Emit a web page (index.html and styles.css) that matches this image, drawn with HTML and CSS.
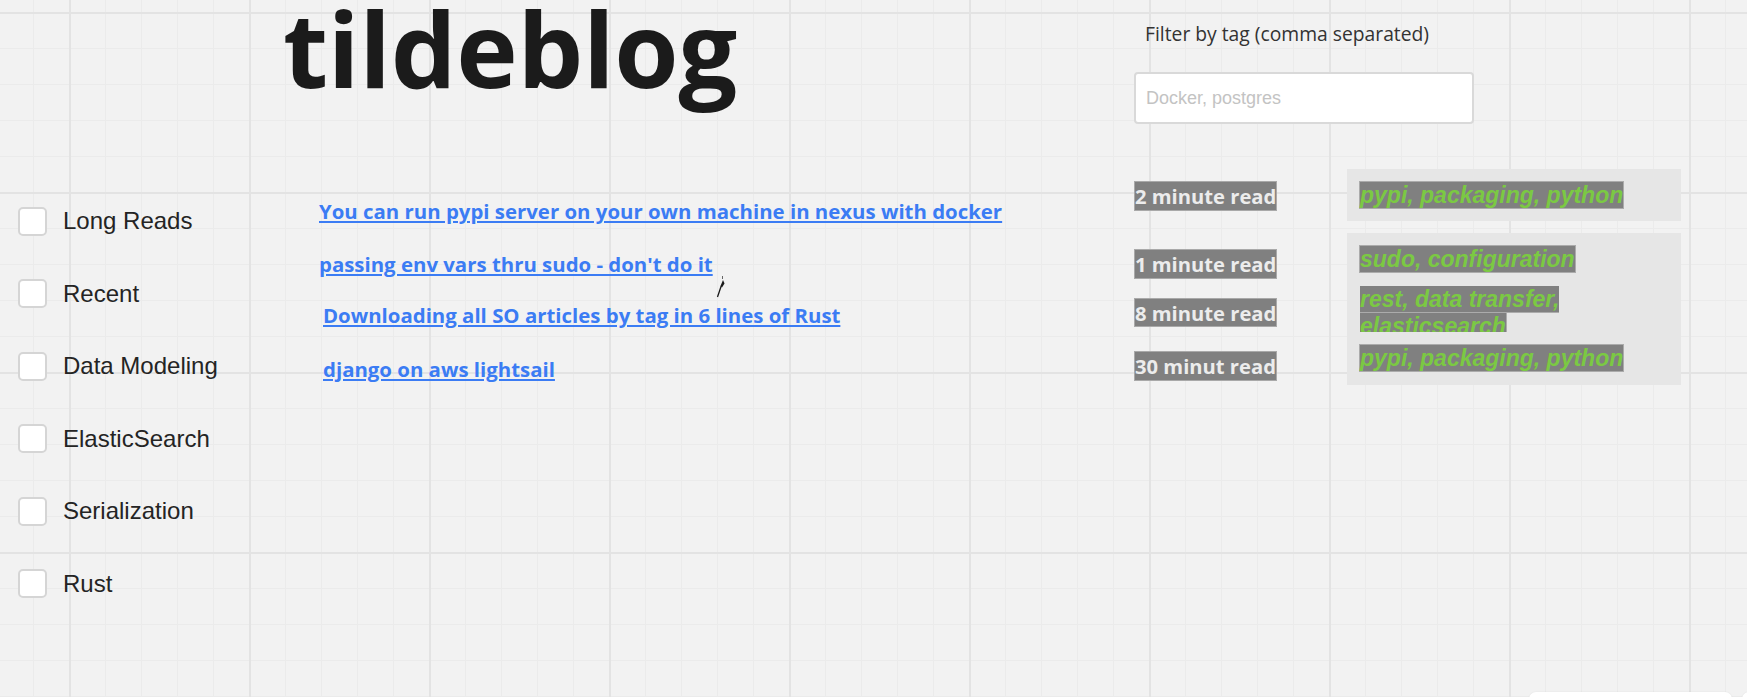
FILE: index.html
```html
<!DOCTYPE html>
<html lang="en">
<head>
<meta charset="utf-8">
<title>tildeblog</title>
<link rel="stylesheet" href="styles.css">
</head>
<body>
<div class="page">
  <header class="top">
    <h1 class="title">tildeblog</h1>
    <div class="filter">
      <label class="filter-label" for="tagfilter">Filter by tag (comma separated)</label>
      <input class="filter-input" id="tagfilter" type="text" placeholder="Docker, postgres">
    </div>
  </header>

  <main class="main">
    <ul class="cats">
      <li class="cat"><input class="box" type="checkbox"><span class="cat-label">Long Reads</span></li>
      <li class="cat"><input class="box" type="checkbox"><span class="cat-label">Recent</span></li>
      <li class="cat"><input class="box" type="checkbox"><span class="cat-label">Data Modeling</span></li>
      <li class="cat"><input class="box" type="checkbox"><span class="cat-label">ElasticSearch</span></li>
      <li class="cat"><input class="box" type="checkbox"><span class="cat-label">Serialization</span></li>
      <li class="cat"><input class="box" type="checkbox"><span class="cat-label">Rust</span></li>
    </ul>

    <div class="posts">
      <div class="post"><a class="post-link" href="#">You can run pypi server on your own machine in nexus with docker</a></div>
      <div class="post"><a class="post-link" href="#">passing env vars thru sudo - don't do it</a></div>
      <div class="post indent"><a class="post-link" href="#">Downloading all SO articles by tag in 6 lines of Rust</a></div>
      <div class="post indent"><a class="post-link" href="#">django on aws lightsail</a></div>
    </div>

    <div class="reads">
      <div class="read"><span class="badge">2 minute read</span></div>
      <div class="read"><span class="badge">1 minute read</span></div>
      <div class="read"><span class="badge">8 minute read</span></div>
      <div class="read"><span class="badge">30 minut read</span></div>
    </div>

    <div class="tagcol">
      <div class="tagbox">
        <div class="tagitem"><span class="tags">pypi, packaging, python</span></div>
      </div>
      <div class="tagbox">
        <div class="tagitem"><span class="tags">sudo, configuration</span></div>
        <div class="tagitem clipped"><span class="tags">rest, data transfer, elasticsearch</span></div>
        <div class="tagitem"><span class="tags">pypi, packaging, python</span></div>
      </div>
    </div>
  </main>

  <svg class="cursor" width="14" height="24" viewBox="0 0 14 24" aria-hidden="true">
    <path d="M9.5 1 L9.5 4" stroke="#666" stroke-width="1" fill="none"/>
    <path d="M10 5 L11.5 8.5 L9 12.5 L7.5 11 Z" fill="#1a1a1a"/>
    <path d="M8.2 11 L4.5 22" stroke="#1a1a1a" stroke-width="1.3" fill="none"/>
  </svg>

  <div class="dock"></div>
  <div class="dock dock-small"></div>
</div>
</body>
</html>
```

FILE: styles.css
```css
* { box-sizing: border-box; }

html, body {
  margin: 0;
  padding: 0;
}

.page {
  position: relative;
  width: 100vw;
  height: 100vh;
  overflow: hidden;
  background-color: #f2f2f2;
  background-image:
    linear-gradient(to right, #e3e3e3 0 2px, transparent 2px),
    linear-gradient(to bottom, #e3e3e3 0 2px, transparent 2px),
    linear-gradient(to right, #ebebeb 0 1px, transparent 1px),
    linear-gradient(to bottom, #ebebeb 0 1px, transparent 1px);
  background-size: 180px 180px, 180px 180px, 36px 36px, 36px 36px;
  background-position: 69px 0, 0 12px, 33px 0, 0 12px;
  font-family: "Open Sans", "Liberation Sans", sans-serif;
}

/* header */
.top {
  display: flex;
  align-items: flex-start;
  height: 169px;
  padding-left: 283px;
}

.title {
  flex: 0 0 851px;
  margin: 7.6px 0 0 0;
  font-family: "Open Sans", sans-serif;
  font-weight: 700;
  font-size: 104px;
  line-height: 80px;
  color: #1b1b1b;
  letter-spacing: -0.3px;
}

.filter {
  display: flex;
  flex-direction: column;
  padding-top: 20px;
}

.filter-label {
  display: block;
  height: 27px;
  margin-left: 11px;
  font-family: "Open Sans", sans-serif;
  font-size: 19.3px;
  color: #333;
}

.filter-input {
  margin-top: 25px;
  width: 340px;
  height: 52px;
  padding: 0 10px;
  border: 2px solid #d9d9d9;
  border-radius: 4px;
  background: #fff;
  font-family: "Liberation Sans", Arial, sans-serif;
  font-size: 18px;
  color: #333;
  outline: none;
}

.filter-input::placeholder {
  color: #c3c3c3;
}

/* main area */
.main {
  display: flex;
  align-items: flex-start;
}

.cats {
  flex: 0 0 319px;
  list-style: none;
  margin: 0;
  padding: 15.75px 0 0 18px;
}

.cat {
  display: flex;
  align-items: center;
  gap: 16px;
  height: 72.55px;
}

.box {
  appearance: none;
  -webkit-appearance: none;
  margin: 0;
  width: 29px;
  height: 29px;
  background: #fff;
  border: 2.5px solid #d5d5d5;
  border-radius: 5px;
}

.cat-label {
  font-family: "Liberation Sans", Arial, sans-serif;
  font-size: 24px;
  color: #242424;
}

.posts {
  flex: 0 0 815px;
  display: flex;
  flex-direction: column;
  padding-top: 30px;
}

.post {
  line-height: 24px;
}

.post:nth-child(2) { margin-top: 27px; }
.post:nth-child(3) { margin-top: 25px; }
.post:nth-child(4) { margin-top: 27.5px; }

.post.indent {
  padding-left: 4px;
}

.post-link {
  font-family: "Open Sans", sans-serif;
  font-weight: 700;
  font-size: 20.4px;
  color: #3b7cf4;
  text-decoration: underline;
  text-decoration-thickness: 2px;
  text-underline-offset: 2px;
}

.reads {
  flex: 0 0 213px;
  display: flex;
  flex-direction: column;
  padding-top: 12px;
}

.read {
  height: 29.7px;
}

.read:nth-child(2) { margin-top: 38.6px; }
.read:nth-child(3) { margin-top: 18.7px; }
.read:nth-child(4) { margin-top: 23.7px; }

.badge {
  display: inline-block;
  height: 29.7px;
  line-height: 28px;
  padding: 0;
  background: #808080;
  border: 1px solid #a9a9a9;
  font-family: "Open Sans", sans-serif;
  font-weight: 700;
  font-size: 20.2px;
  color: #ececec;
  white-space: nowrap;
}

.tagcol {
  flex: 0 0 334px;
  display: flex;
  flex-direction: column;
  gap: 12.3px;
}

.tagbox {
  display: flex;
  flex-direction: column;
  gap: 13px;
  padding: 12.6px 13px;
  background: #e6e6e6;
}

.tagitem {
  line-height: normal;
}

.tagitem.clipped {
  max-height: 46px;
  overflow: hidden;
}

.tags {
  background: #808080;
  box-shadow: 0 0 0 1px #ababab;
  font-family: "Liberation Sans", Arial, sans-serif;
  font-weight: 700;
  font-style: italic;
  font-size: 23px;
  color: #7bc943;
}

/* overlays */
.cursor {
  position: absolute;
  left: 713px;
  top: 275px;
}

.dock {
  position: absolute;
  left: 1529px;
  top: 692px;
  width: 203px;
  height: 20px;
  background: #fff;
  border-radius: 7px;
  box-shadow: 0 0 2px rgba(0,0,0,0.08);
}

.dock-small {
  left: 1742px;
  width: 40px;
}
```
